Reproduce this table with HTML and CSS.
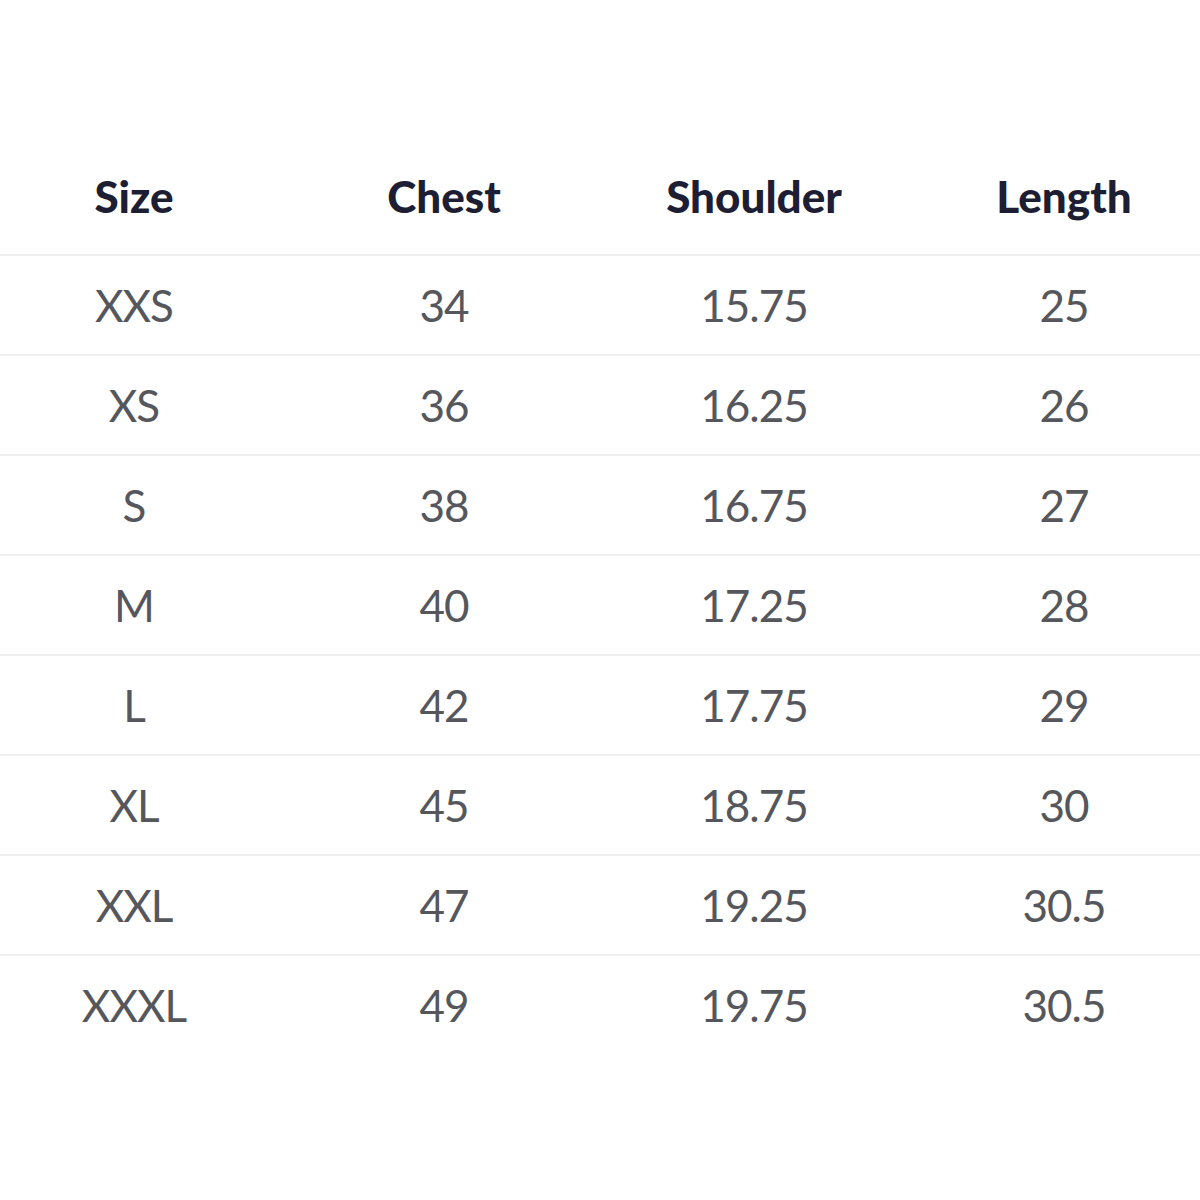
FILE: index.html
```html
<!DOCTYPE html>
<html>
<head>
<meta charset="utf-8">
<link rel="stylesheet" href="styles.css">
</head>
<body>
<div class="page">
  <table class="sizes">
    <thead>
      <tr><th>Size</th><th>Chest</th><th>Shoulder</th><th>Length</th></tr>
    </thead>
    <tbody>
      <tr><td>XXS</td><td>34</td><td>15.75</td><td>25</td></tr>
      <tr><td>XS</td><td>36</td><td>16.25</td><td>26</td></tr>
      <tr><td>S</td><td>38</td><td>16.75</td><td>27</td></tr>
      <tr><td>M</td><td>40</td><td>17.25</td><td>28</td></tr>
      <tr><td>L</td><td>42</td><td>17.75</td><td>29</td></tr>
      <tr><td>XL</td><td>45</td><td>18.75</td><td>30</td></tr>
      <tr><td>XXL</td><td>47</td><td>19.25</td><td>30.5</td></tr>
      <tr><td>XXXL</td><td>49</td><td>19.75</td><td>30.5</td></tr>
    </tbody>
  </table>
</div>
</body>
</html>
```
FILE: styles.css
```css
html, body {
  margin: 0;
  padding: 0;
  background: #fff;
  overflow: hidden;
  width: 1200px;
  height: 1200px;
}
.page {
  padding-top: 152px;
  margin-left: -21px;
  width: 1240px;
}
.sizes {
  width: 1240px;
  table-layout: fixed;
  border-collapse: collapse;
  font-family: Lato, "Open Sans", sans-serif;
  font-size: 44px;
}
.sizes th, .sizes td {
  text-align: center;
  padding: 0;
}
.sizes th {
  height: 88px;
  padding-bottom: 14px;
  font-weight: 900;
  color: #1d1e33;
  vertical-align: middle;
  border-bottom: 2px solid #f0f0f0;
}
.sizes td {
  height: 98px;
  color: #55575c;
  font-weight: 400;
  letter-spacing: -1px;
  border-bottom: 2px solid #f0f0f0;
}
.sizes tbody tr:last-child td {
  border-bottom: none;
}
```
